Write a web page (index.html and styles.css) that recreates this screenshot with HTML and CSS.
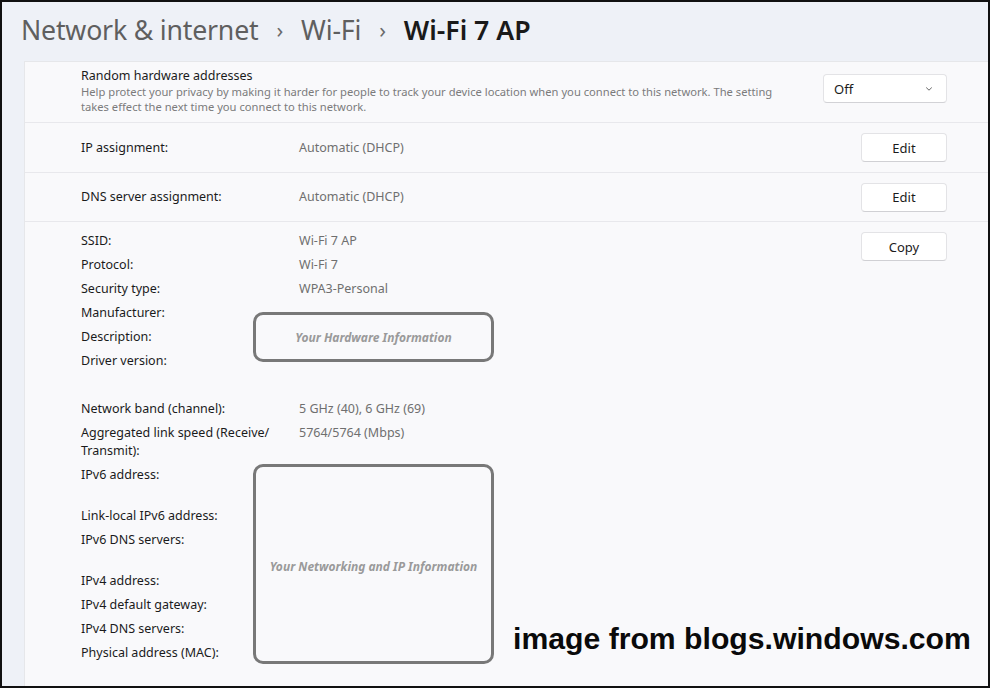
FILE: index.html
```html
<!DOCTYPE html>
<html>
<head>
<meta charset="utf-8">
<link rel="stylesheet" href="styles.css">
</head>
<body>
<div class="frame">
  <header class="crumbs">
    <span class="crumb">Network &amp; internet</span>
    <span class="sep">&#x203A;</span>
    <span class="crumb">Wi-Fi</span>
    <span class="sep">&#x203A;</span>
    <span class="crumb current">Wi-Fi 7 AP</span>
  </header>
  <main class="card">
    <section class="row row-random">
      <div class="row-text">
        <div class="row-title">Random hardware addresses</div>
        <div class="row-desc">Help protect your privacy by making it harder for people to track your device location when you connect to this network. The setting takes effect the next time you connect to this network.</div>
      </div>
      <div class="dropdown">
        <span>Off</span>
        <svg class="chev" width="10" height="10" viewBox="0 0 10 10"><path d="M2.5 3.8 L5 6.2 L7.5 3.8" fill="none" stroke="#666" stroke-width="1" stroke-linecap="round" stroke-linejoin="round"/></svg>
      </div>
    </section>
    <section class="row row-kv">
      <div class="label">IP assignment:</div>
      <div class="value">Automatic (DHCP)</div>
      <button class="btn">Edit</button>
    </section>
    <section class="row row-kv">
      <div class="label">DNS server assignment:</div>
      <div class="value">Automatic (DHCP)</div>
      <button class="btn">Edit</button>
    </section>
    <section class="details">
      <div class="props">
        <div class="label">SSID:</div><div class="value">Wi-Fi 7 AP</div>
        <div class="label">Protocol:</div><div class="value">Wi-Fi 7</div>
        <div class="label">Security type:</div><div class="value">WPA3-Personal</div>
        <div class="label">Manufacturer:</div><div class="value"></div>
        <div class="label">Description:</div><div class="value"></div>
        <div class="label">Driver version:</div><div class="value"></div>
        <div class="label gap-top">Network band (channel):</div><div class="value gap-top">5 GHz (40), 6 GHz (69)</div>
        <div class="label">Aggregated link speed (Receive/ Transmit):</div><div class="value">5764/5764 (Mbps)</div>
        <div class="label">IPv6 address:</div><div class="value"></div>
        <div class="label gap-mid">Link-local IPv6 address:</div><div class="value gap-mid"></div>
        <div class="label">IPv6 DNS servers:</div><div class="value"></div>
        <div class="label gap-mid">IPv4 address:</div><div class="value gap-mid"></div>
        <div class="label">IPv4 default gateway:</div><div class="value"></div>
        <div class="label">IPv4 DNS servers:</div><div class="value"></div>
        <div class="label">Physical address (MAC):</div><div class="value"></div>
      </div>
      <button class="btn btn-copy">Copy</button>
      <div class="mask mask-hw">Your Hardware Information</div>
      <div class="mask mask-net">Your Networking and IP Information</div>
    </section>
  </main>
  <div class="credit">image from blogs.windows.com</div>
</div>
</body>
</html>
```
FILE: styles.css
```css
html, body {
  margin: 0;
  padding: 0;
  background: #ffffff;
}
.frame {
  position: relative;
  width: 990px;
  height: 688px;
  box-sizing: border-box;
  border: 2px solid #111;
  background: #eef1f7;
  overflow: hidden;
  font-family: "Noto Sans", "Open Sans", sans-serif;
  color: #1b1b1b;
}
.crumbs {
  height: 59px;
  display: flex;
  align-items: center;
  padding-left: 19px;
  padding-bottom: 5px;
  box-sizing: border-box;
  font-size: 26.7px;
  color: #5f5f5f;
  letter-spacing: -0.2px;
}
.crumbs .sep {
  font-size: 22px;
  margin: 0 18px 0 18px;
  color: #6a6a6a;
}
.crumbs .current {
  color: #1a1a1a;
  font-weight: 600;
  letter-spacing: 0;
}
.card {
  margin-left: 22px;
  background: #f9f9fb;
  border-left: 1px solid #e6e7ea;
  border-top: 1px solid #e6e7ea;
  height: 640px;
}
.row {
  display: flex;
  align-items: center;
  padding: 0 41px 0 56px;
  border-bottom: 1px solid #e8e8ec;
  box-sizing: border-box;
}
.row-random {
  height: 61px;
  align-items: flex-start;
  padding-top: 5px;
}
.row-text {
  flex: 1;
  padding-right: 30px;
}
.row-title {
  font-size: 12.5px;
  line-height: 17px;
  color: #1b1b1b;
}
.row-desc {
  font-size: 11.2px;
  line-height: 15px;
  color: #7b7b7b;
  width: 710px;
}
.dropdown {
  width: 124px;
  height: 29px;
  margin-top: 7px;
  box-sizing: border-box;
  background: #fff;
  border: 1px solid #e3e3e6;
  border-bottom-color: #d2d2d6;
  border-radius: 4px;
  display: flex;
  align-items: center;
  justify-content: space-between;
  padding: 0 12px 0 10px;
  font-size: 13px;
  color: #1b1b1b;
}
.row-kv {
  height: 50px;
}
.row-kv + .row-kv {
  height: 49px;
}
.label {
  width: 218px;
  font-size: 12.5px;
  line-height: 18px;
  color: #1b1b1b;
}
.value {
  flex: 1;
  font-size: 12.5px;
  line-height: 18px;
  color: #6f6f6f;
}
.btn {
  width: 86px;
  height: 29px;
  box-sizing: border-box;
  background: #fff;
  border: 1px solid #e3e3e6;
  border-bottom-color: #d0d0d4;
  border-radius: 4px;
  font-family: inherit;
  font-size: 13px;
  color: #1b1b1b;
  padding: 0;
}
.details {
  position: relative;
  display: flex;
  align-items: flex-start;
  padding: 10px 41px 0 56px;
}
.props {
  flex: 1;
  display: grid;
  grid-template-columns: 218px 1fr;
  row-gap: 6px;
}
.props .label, .props .value {
  width: auto;
}
.props .label:nth-child(15) {
  width: 205px;
}
.gap-top {
  margin-top: 24px;
}
.gap-mid {
  margin-top: 17px;
}
.mask {
  position: absolute;
  box-sizing: border-box;
  border: 3px solid #787878;
  border-radius: 10px;
  background: #f9f9fb;
  display: flex;
  align-items: center;
  justify-content: center;
  font-style: italic;
  font-weight: 700;
  font-size: 12px;
  color: #9a9a9a;
}
.mask-hw {
  left: 228px;
  top: 90px;
  width: 241px;
  height: 50px;
}
.mask-net {
  left: 228px;
  top: 242px;
  width: 241px;
  height: 200px;
  padding-top: 5px;
}
.credit {
  position: absolute;
  left: 511px;
  top: 620px;
  font-family: "Liberation Sans", Arial, sans-serif;
  font-weight: 700;
  font-size: 30.2px;
  color: #0a0a0a;
}
```
